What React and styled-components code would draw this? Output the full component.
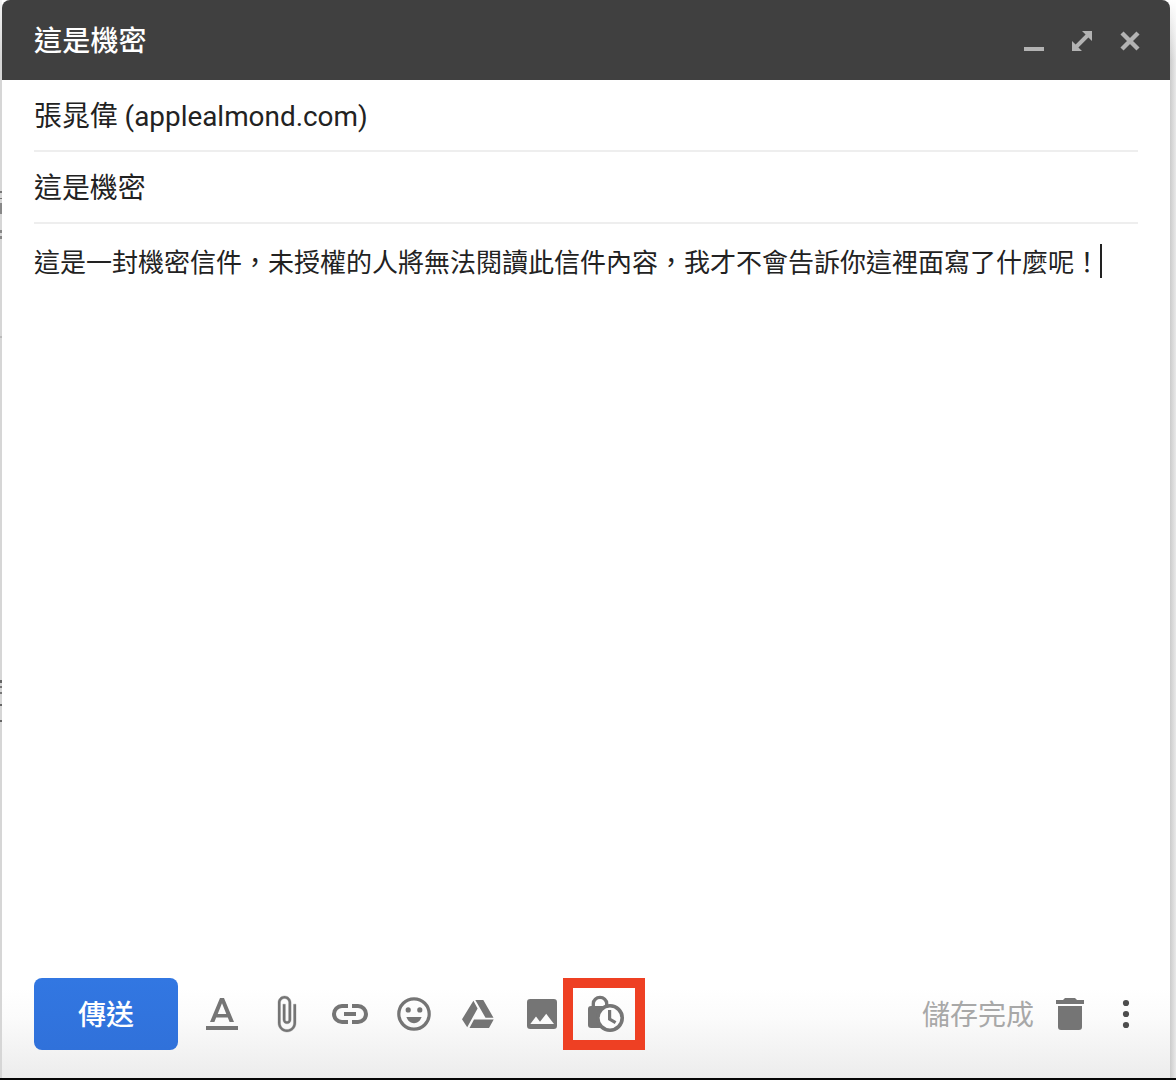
import React from "react";
import styled, { createGlobalStyle } from "styled-components";

const GlobalStyle = createGlobalStyle`
    body {
        margin: 0;
        overflow: hidden;
        font-family: Roboto, "Noto Sans CJK TC", sans-serif;
        color: #222;
    }
    * {
        box-sizing: border-box;
    }
`
const Page = styled.div`
    width: 1176px;
    height: 1080px;
    display: flex;
    background: #fff;
    border-bottom: 2px solid #060606;
`
const mark = (y, h, color) => `linear-gradient(${color}, ${color}) 0 ${y}px / 2px ${h}px no-repeat`

// sliver of the mail list that stays visible left of the window
const LeftEdge = styled.div`
    width: 2px;
    background:
        ${mark(191, 2, "#777")},
        ${mark(198, 1, "#777")},
        ${mark(203, 11, "#888")},
        ${mark(230, 3, "#888")},
        ${mark(236, 3, "#888")},
        ${mark(336, 2, "#bbb")},
        ${mark(680, 3, "#666")},
        ${mark(686, 2, "#777")},
        ${mark(692, 2, "#777")},
        ${mark(704, 2, "#666")},
        ${mark(720, 2, "#666")},
        linear-gradient(#f4f4f4, #d6d6d6 60px, #d6d6d6);
`
const RightEdge = styled.div`
    width: 6px;
    background:
        linear-gradient(#fff, rgba(255, 255, 255, 0) 60px),
        linear-gradient(to right, #cbcbcb, #e9e9e9);
`
const Compose = styled.div`
    width: 1168px;
    display: flex;
    flex-direction: column;
    background: #fff;
    border-radius: 8px 8px 0 0;
`
const Header = styled.div`
    height: 80px;
    padding: 0 30px 0 32px;
    display: flex;
    align-items: center;
    justify-content: space-between;
    background: #404040;
    border-radius: 8px 8px 0 0;
`
const Title = styled.div`
    padding-top: 4px;
    font-size: 28px;
    font-weight: 500;
    letter-spacing: 0.2px;
    line-height: 76px;
    color: #fff;
`
const WindowButtons = styled.div`
    display: flex;
    gap: 28px;
    padding-top: 2px;
    color: #b3b3b3;
`
const Field = styled.div`
    height: 72px;
    margin: 0 32px;
    padding-top: 2px;
    font-size: 27.9px;
    line-height: 70px;
    border-bottom: 2px solid #eee;
    white-space: pre;
`
const Body = styled.div`
    flex: 1;
    padding: 20px 32px 0;
    display: flex;
    align-items: flex-start;
    font-size: 26px;
    line-height: 38px;
    white-space: nowrap;
`
const Caret = styled.span`
    width: 2px;
    height: 34px;
    background: #222;
`
const Footer = styled.div`
    height: 100px;
    padding: 0 24px 0 32px;
    display: flex;
    align-items: flex-start;
    background: linear-gradient(#fff 10px, #fbfbfb 40px, #ececec);
`
const SendButton = styled.button`
    width: 144px;
    height: 72px;
    margin-right: 24px;
    padding: 4px 0 0;
    border: 0;
    border-radius: 8px;
    background: linear-gradient(#3277e2, #3071da);
    color: #fff;
    font-family: inherit;
    font-size: 28px;
    font-weight: 500;
    line-height: 68px;
`
const Tools = styled.div`
    flex: 1;
    height: 72px;
    display: flex;
    align-items: center;
    gap: 24px;
    color: #757575;
`
const Tool = styled.div`
    position: relative;
    width: 40px;
    height: 40px;
`
const Highlight = styled.div`
    position: absolute;
    left: -23px;
    top: -16px;
    width: 82px;
    height: 72px;
    border: 10px solid #ee4023;
`
const Status = styled.div`
    height: 72px;
    display: flex;
    align-items: center;
    color: #757575;
`
const Saved = styled.span`
    margin-right: 16px;
    padding-top: 3px;
    font-size: 28px;
    line-height: 69px;
    color: #a8a8a8;
`
const StatusIcons = styled.div`
    display: flex;
    gap: 16px;
`
const Svg = styled.svg`
    display: block;
    width: ${props => props.$size}px;
    height: ${props => props.$size}px;
    fill: currentColor;
`

function Icon({size = 40, children}){
    return <Svg $size={size} viewBox={"0 0 " + size + " " + size}>{children}</Svg>
}

function ComposeHeader({title}){
    return(
        <Header>
            <Title>{title}</Title>
            <WindowButtons>
                <Icon size={20}><path d="M0 16h20v4H0z" /></Icon>
                <Icon size={20}>
                    <path d="M10 0h10v10l-3.6-3.6L6.4 16.4L10 20H0V10l3.6 3.6L13.6 3.6z" />
                </Icon>
                <Icon size={20}>
                    <path d="M2 2L18 18M18 2L2 18" stroke="currentColor" strokeWidth="4.4" />
                </Icon>
            </WindowButtons>
        </Header>
    );
}

function FormatIcon(){
    return(
        <Icon>
            <path fillRule="evenodd" d="M18 4h4L32 28h-4.4l-1.8-4.4H14.2L12.400 28H8zM20 9.200L15.700 19.900h8.600z" />
            <path d="M4 32h32v4H4z" />
        </Icon>
    );
}

function AttachIcon(){
    return(
        <Icon>
            <path
                transform="translate(.55 .36) scale(1.636)"
                stroke="currentColor"
                strokeWidth=".2"
                d="M16.5 6v11.5c0 2.21-1.79 4-4 4s-4-1.79-4-4V5c0-1.38 1.12-2.5 2.5-2.5s2.5 1.12 2.5 2.5v10.5c0 .55-.45 1-1 1s-1-.45-1-1V6H10v9.5c0 1.38 1.12 2.5 2.5 2.5s2.5-1.12 2.5-2.5V5c0-2.21-1.79-4-4-4S7 2.79 7 5v12.5c0 3.04 2.46 5.5 5.5 5.5s5.5-2.46 5.5-5.5V6h-1.5z"
            />
        </Icon>
    );
}

function LinkIcon(){
    return(
        <Icon>
            <path d="M18 12h-6a8 8 0 0 0 0 16h6M22 12h6a8 8 0 0 1 0 16h-6M14 20h12" fill="none" stroke="currentColor" strokeWidth="4" />
        </Icon>
    );
}

function EmojiIcon(){
    return(
        <Icon>
            <circle cx="20" cy="20" r="15.2" fill="none" stroke="currentColor" strokeWidth="3.2" />
            <circle cx="14.2" cy="15.9" r="2.6" />
            <circle cx="25.8" cy="15.9" r="2.6" />
            <path d="M12.4 23h15.2c-1.2 3.8-4.2 6.2-7.6 6.2s-6.4-2.4-7.6-6.2z" />
        </Icon>
    );
}

function DriveIcon(){
    return(
        <Icon>
            <path d="M15.4 6.8L19.6 14.4L9.2 33.3L4 25.3zM17.3 6h8L35.5 23.7h-8zM16 25.5h19.7L31 34H11.5z" />
        </Icon>
    );
}

function PhotoIcon(){
    return(
        <Icon>
            <path fillRule="evenodd" d="M8.3 5h23.4A3.3 3.3 0 0 1 35 8.3v23.4a3.3 3.3 0 0 1-3.3 3.3H8.3A3.3 3.3 0 0 1 5 31.7V8.3A3.3 3.3 0 0 1 8.3 5zM8.3 30H32L24.2 19.8L18 27.8L14 22.6z" />
        </Icon>
    );
}

function ConfidentialIcon(){
    return(
        <Icon>
            <path d="M7.3 13V9.5a6.7 6.1 0 0 1 13.4 0V13" fill="none" stroke="currentColor" strokeWidth="3.3" />
            <path d="M5 12h17v22H5a3 3 0 0 1-3-3V15a3 3 0 0 1 3-3z" />
            <circle cx="24" cy="24" r="12.2" fill="#fdfdfd" stroke="currentColor" strokeWidth="3.6" />
            <path d="M23.6 16v9l6 3.6" fill="none" stroke="currentColor" strokeWidth="3.2" />
        </Icon>
    );
}

function TrashIcon(){
    return(
        <Icon>
            <path d="M6 6h7l2-2h10l2 2h7v4H6zM8 12h24v21a3 3 0 0 1-3 3H11a3 3 0 0 1-3-3z" />
        </Icon>
    );
}

function MoreIcon(){
    return(
        <Icon>
            <g fill="#4d4d4d">
                <circle cx="20" cy="9" r="3.1" />
                <circle cx="20" cy="20" r="3.1" />
                <circle cx="20" cy="31" r="3.1" />
            </g>
        </Icon>
    );
}

function ComposeFooter(){
    return(
        <Footer>
            <SendButton>傳送</SendButton>
            <Tools>
                <Tool><FormatIcon /></Tool>
                <Tool><AttachIcon /></Tool>
                <Tool><LinkIcon /></Tool>
                <Tool><EmojiIcon /></Tool>
                <Tool><DriveIcon /></Tool>
                <Tool><PhotoIcon /></Tool>
                <Tool>
                    <ConfidentialIcon />
                    <Highlight />
                </Tool>
            </Tools>
            <Status>
                <Saved>儲存完成</Saved>
                <StatusIcons>
                    <TrashIcon />
                    <MoreIcon />
                </StatusIcons>
            </Status>
        </Footer>
    );
}

function App(){
    return(
        <Page lang="zh-Hant">
            <GlobalStyle />
            <LeftEdge />
            <Compose>
                <ComposeHeader title="這是機密" />
                <Field>張晁偉 (applealmond.com)</Field>
                <Field>這是機密</Field>
                <Body>
                    這是一封機密信件，未授權的人將無法閱讀此信件內容，我才不會告訴你這裡面寫了什麼呢！
                    <Caret />
                </Body>
                <ComposeFooter />
            </Compose>
            <RightEdge />
        </Page>
    );
}

export default App;
